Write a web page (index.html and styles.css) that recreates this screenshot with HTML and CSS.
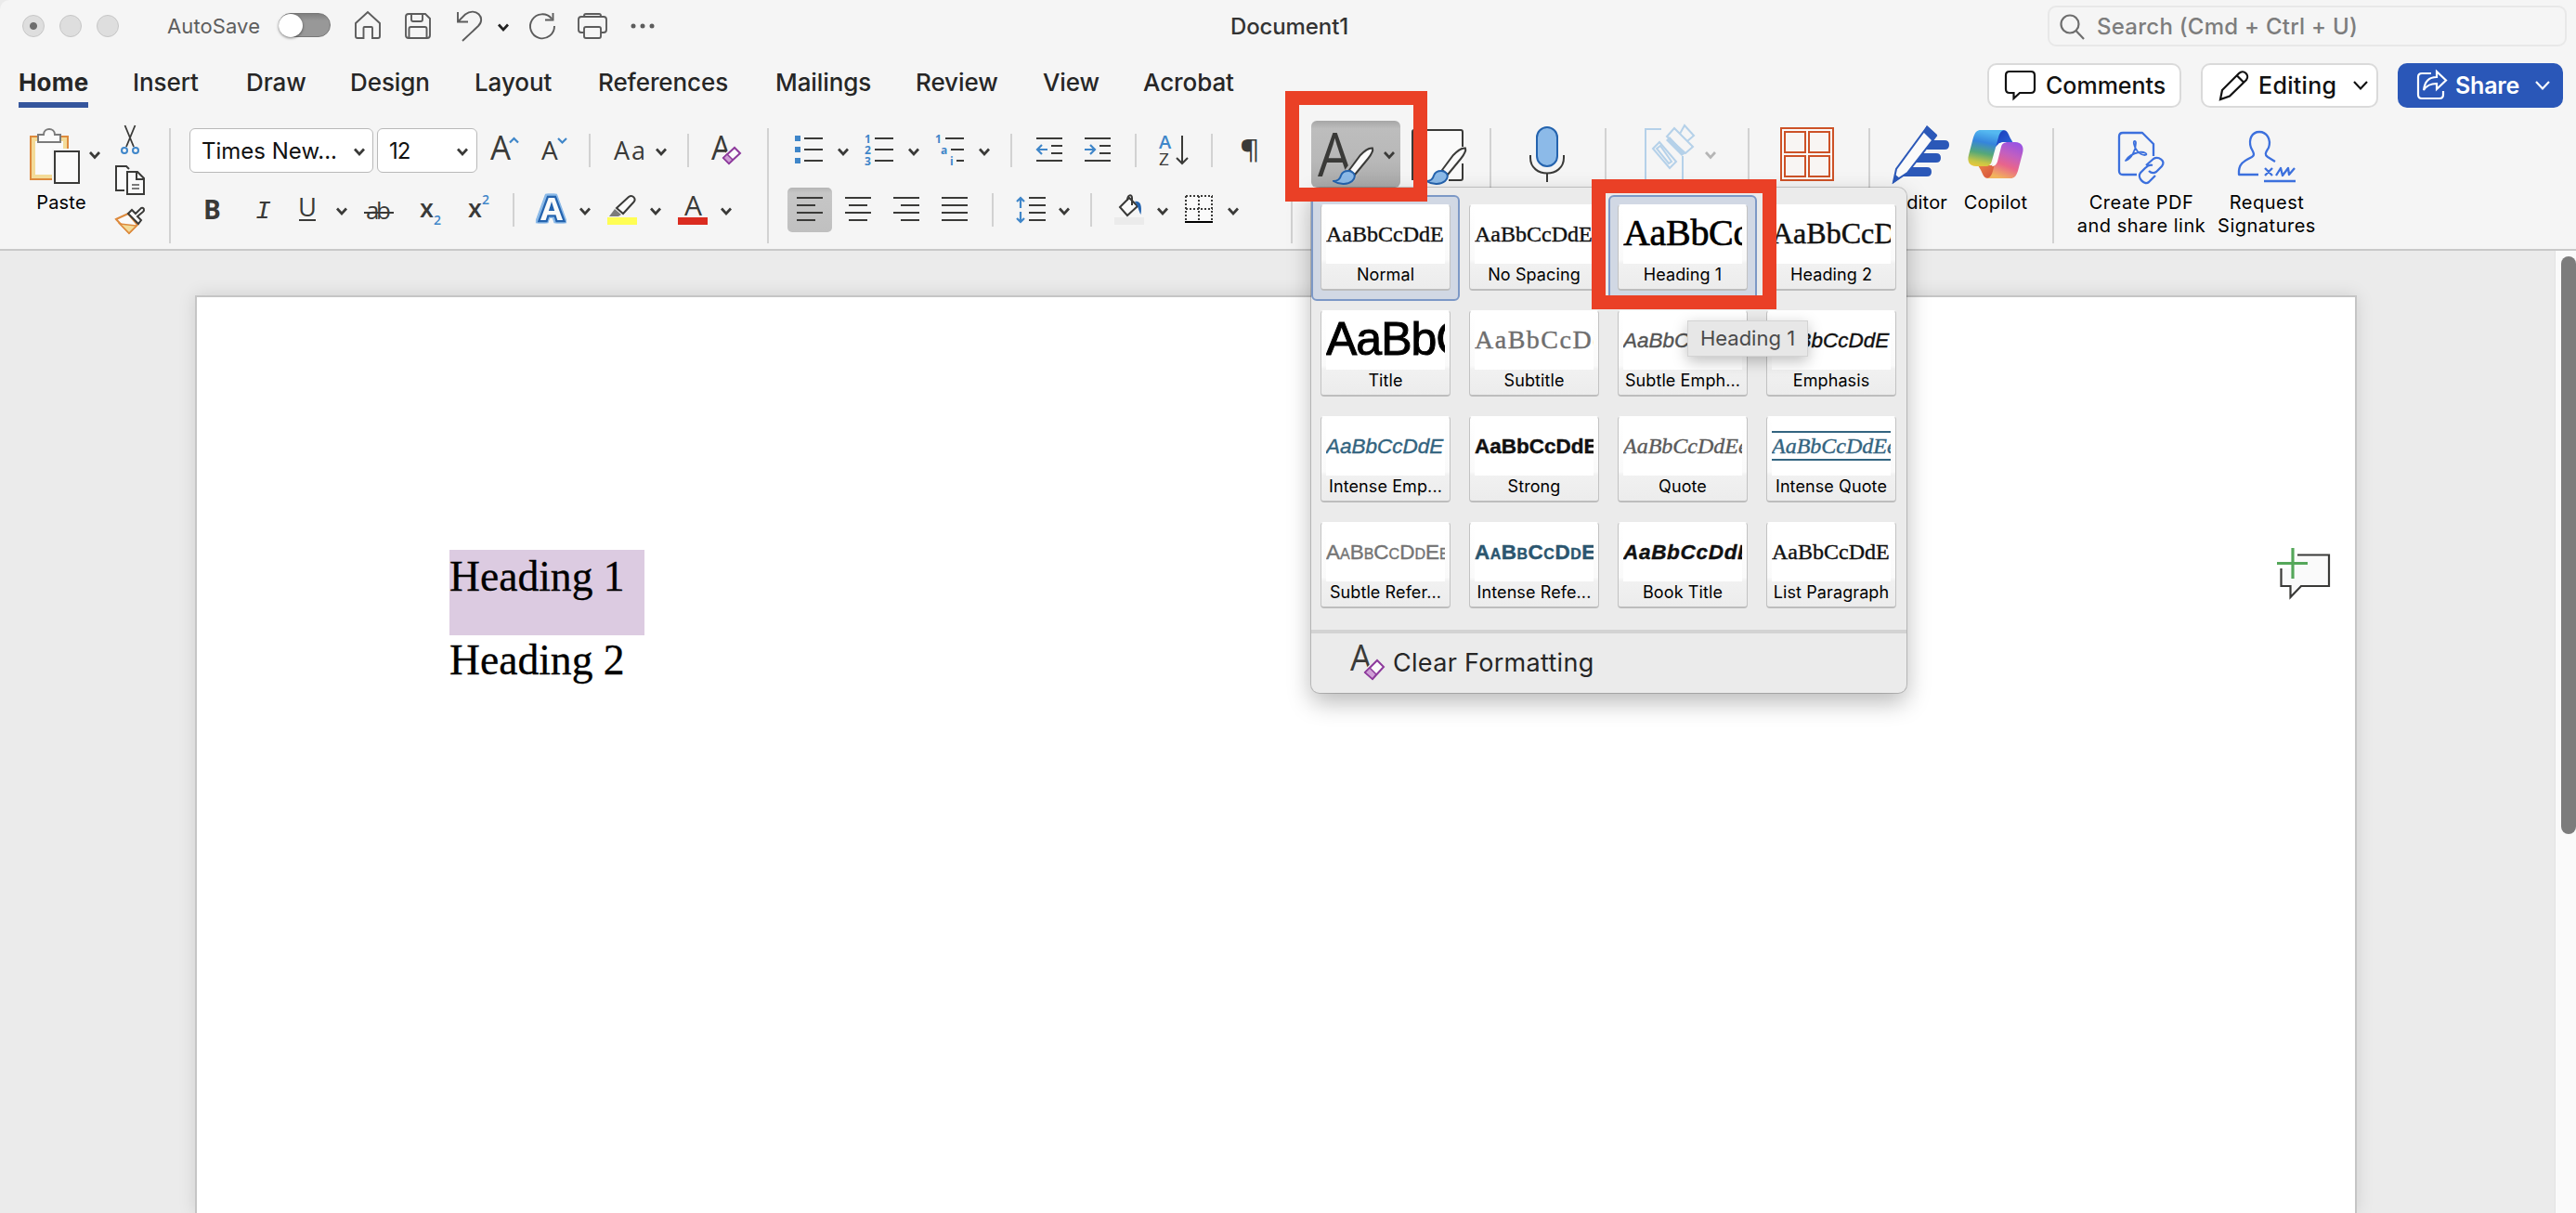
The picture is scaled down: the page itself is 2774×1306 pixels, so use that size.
FILE: index.html
```html
<!DOCTYPE html>
<html lang="en">
<head>
<meta charset="utf-8">
<title>Document1</title>
<link rel="stylesheet" href="styles.css">
</head>
<body>
<svg class="defs" width="0" height="0">
  <symbol id="chev" viewBox="0 0 12 9"><path d="M1 1.5 6 7 11 1.5" fill="none" stroke="currentColor" stroke-width="2.7"/></symbol>
  <symbol id="brush" viewBox="0 0 46 42"><path d="M43 1.500C38 1 34 5 30 9L18 25 24 30 38 13C42 8 44 4 43 1.500Z" fill="#fafafa" stroke="#3a3a38" stroke-width="2"/><path d="M17 26C12 26 10 28 9 31 8 35 5 37 1 37 8 41.500 17 40.500 21 37 24.500 34 24.500 30 22 28 20.500 26.500 19 26 17 26Z" fill="#8cbae8" stroke="#2463ae" stroke-width="2"/></symbol>
</svg>

<header class="ribbon">
  <div class="titlebar">
    <div class="quick">
      <i class="light close"></i><i class="light"></i><i class="light"></i>
      <span class="autosave">AutoSave</span>
      <span class="toggle"><b></b></span>
      <svg width="28" height="56" class="q"><path d="M1 25 14 13 27 25V39Q27 41 25 41H19V30Q19 29 18 29H10.500Q9.500 29 9.500 30V41H3Q1 41 1 39Z"/></svg>
      <svg width="28" height="56" class="q"><path d="M4 15H22L27 20V38Q27 41 24 41H4Q1 41 1 38V18Q1 15 4 15ZM7 15V21Q7 23 9 23H17Q19 23 19 21V15M4.500 41V31Q4.500 29 6.500 29H21.500Q23.500 29 23.500 31V41"/></svg>
      <svg width="28" height="56" class="q"><path d="M1 13V23.500H12M1.500 23 9 15.500C20 7 32 19 23 28L6 44"/></svg>
      <svg width="12" height="9" class="chev dark"><use href="#chev"/></svg>
      <svg width="28" height="56" class="q"><path d="M24 20A13 13 0 1 0 27 28M17 21.500H25.500V14"/></svg>
      <svg width="32" height="56" class="q"><path d="M7 35H4Q1 35 1 32V21Q1 18 4 18H28Q31 18 31 21V32Q31 35 28 35H25M7 18V17Q7 15 9 15H23Q25 15 25 17V18M7 31Q7 29 9 29H23Q25 29 25 31V39Q25 41 23 41H9Q7 41 7 39Z"/></svg>
      <svg width="28" height="56" class="dots"><circle cx="3" cy="28" r="2.500"/><circle cx="13" cy="28" r="2.500"/><circle cx="23" cy="28" r="2.500"/></svg>
    </div>
    <h1 class="doc-title">Document1</h1>
    <div class="search">
      <svg width="28" height="28"><circle cx="11" cy="11" r="9.500"/><path d="M17.500 18 26 27"/></svg>
      <span>Search (Cmd + Ctrl + U)</span>
    </div>
  </div>

  <div class="tabbar">
    <nav class="tabs">
      <a class="active">Home</a><a>Insert</a><a>Draw</a><a>Design</a><a>Layout</a><a>References</a><a>Mailings</a><a>Review</a><a>View</a><a>Acrobat</a>
    </nav>
    <div class="actions">
      <button class="act comments"><svg width="34" height="34"><path d="M5 2H28Q32 2 32 6V21Q32 25 28 25H16L9.500 31V25H5Q1 25 1 21V6Q1 2 5 2Z"/></svg><span>Comments</span></button>
      <button class="act editing"><svg width="34" height="34"><path d="M2 32 4 22 22 4C27-1 34 6 30 11L12 28.500ZM20 6.500 27.500 14"/></svg><span>Editing</span><svg width="16" height="10"><path d="M1 1 8 8.500 15 1"/></svg></button>
      <button class="act share"><svg width="34" height="34"><path d="M16 4H6Q2 4 2 8V27Q2 31 6 31H25Q29 31 29 27V23M22 8V2L32 11.500 22 21V15C15 15 11 17 8 22 9 13 14 8 22 8Z"/></svg><span>Share</span><svg width="16" height="10"><path d="M1 1 8 8.500 15 1"/></svg></button>
    </div>
  </div>

  <div class="groups">
    <section class="group clipboard">
      <div class="paste">
        <svg width="78" height="72">
          <path d="M1 17H41V63H1Z" fill="#f3db98" stroke="#dd8a3d" stroke-width="2"/><path d="M6 22H36V58H6Z" fill="#fafafa"/>
          <path d="M24 30H46V70H24Z" fill="#f5f5f5"/>
          <path d="M9 15H15C15 7 27 7 27 15H33V23H9Z" fill="#fafafa" stroke="#7b7b7b" stroke-width="2"/>
          <path d="M27 33H53V67H27Z" fill="#fafafa" stroke="#3a3a38" stroke-width="2"/>
          <path d="M65 34 70 39.500 75 34" fill="none" stroke="#3a3a38" stroke-width="2.700"/>
        </svg>
        <span class="lbl">Paste</span>
      </div>
      <div class="cliptools">
        <svg width="32" height="34"><path d="M10.500 1 20 24M21.500 1 12 24" fill="none" stroke="#3a3a38" stroke-width="1.800"/><g fill="none" stroke="#3f86c9" stroke-width="2"><circle cx="10" cy="28" r="3"/><circle cx="22" cy="28" r="3"/></g></svg>
        <svg width="34" height="34"><g fill="#fafafa" stroke="#3a3a38" stroke-width="2"><path d="M10 27H1V1H12L15 4"/><path d="M13 7H24L31 14V31H13Z"/><path d="M23 7V15H31" fill="none"/></g><path d="M18 21H26M18 25H26" stroke="#7b7b7b" stroke-width="2"/></svg>
        <svg width="34" height="32"><path d="M1 14 14 8 24 20 15 29Z" fill="#fafafa" stroke="#dd8a3d" stroke-width="2"/><path d="M5 19 23 21 15 29Z" fill="#f3db98" stroke="#dd8a3d" stroke-width="1.500"/><path d="M14 8 18 4 22 8 28 2C31 1 32 4 30 6L24 11 28 15 25 19Z" fill="#fafafa" stroke="#3a3a38" stroke-width="2"/></svg>
      </div>
    </section>

    <section class="group font">
      <div class="row f1">
        <span class="combo">Times New...<svg width="12" height="9"><use href="#chev"/></svg></span>
        <span class="combo small">12<svg width="12" height="9"><use href="#chev"/></svg></span>
        <svg width="32" height="48" class="ic"><text x="0" y="34" font-size="36" textLength="22" lengthAdjust="spacingAndGlyphs">A</text><path class="bl" d="M21 15.500 25.500 11 30 15.500"/></svg>
        <svg width="30" height="48" class="ic"><text x="0" y="34" font-size="28">A</text><path class="bl" d="M18 11 22.500 15.500 27 11"/></svg>
        <i class="sep"></i>
        <svg width="34" height="48" class="ic"><text x="0" y="34" font-size="27">A</text><text x="19" y="34" font-size="27">a</text></svg>
        <svg width="12" height="9" class="chev"><use href="#chev"/></svg>
        <i class="sep"></i>
        <svg width="34" height="48" class="ic"><text x="0" y="34" font-size="36" textLength="21" lengthAdjust="spacingAndGlyphs">A</text><path d="M13 32 25 21 31 27 19 38Z" fill="#f5f5f5" stroke="#f5f5f5" stroke-width="5"/><path d="M13 32 25 21 31 27 19 38Z" fill="#fafafa" stroke="#8d3a9c" stroke-width="2"/><path d="M13 32 17 28 23 34 19 38Z" fill="#cf9fd6" stroke="#8d3a9c" stroke-width="1.500"/></svg>
      </div>
      <div class="row f2">
        <svg width="18" height="48" class="ic"><text x="-2" y="34" font-size="28" class="bold">B</text></svg>
        <svg width="18" height="48" class="ic"><text x="1" y="33" font-size="28" class="mono">I</text></svg>
        <svg width="20" height="48" class="ic"><text x="-1" y="31" font-size="27" textLength="20" lengthAdjust="spacingAndGlyphs">U</text><path d="M0 35H18"/></svg>
        <svg width="12" height="9" class="chev"><use href="#chev"/></svg>
        <svg width="34" height="48" class="ic"><text x="2" y="34" font-size="26" textLength="27">ab</text><path d="M0 27H32"/></svg>
        <svg width="26" height="48" class="ic"><text x="-1" y="32" font-size="27" class="semi">x</text><text x="14" y="40" font-size="14" class="blt">2</text></svg>
        <svg width="26" height="48" class="ic"><text x="-1" y="32" font-size="27" class="semi">x</text><text x="14" y="18" font-size="14" class="blt">2</text></svg>
        <i class="sep"></i>
        <svg width="34" height="48" class="ic"><text x="4" y="35" font-size="34" textLength="24" lengthAdjust="spacingAndGlyphs" class="fx">A</text></svg>
        <svg width="12" height="9" class="chev"><use href="#chev"/></svg>
        <svg width="34" height="48" class="ic"><path d="M2 31 8 23 15 29 12 31Z" fill="#7b7b7b" stroke="none"/><path d="M10 22 23 10C27 7 32 12 28 16L17 28Z" fill="#fafafa"/><path d="M0 32H32V40H0Z" fill="#fffe54" stroke="none"/></svg>
        <svg width="12" height="9" class="chev"><use href="#chev"/></svg>
        <svg width="34" height="48" class="ic"><text x="7" y="30" font-size="30" textLength="19" lengthAdjust="spacingAndGlyphs">A</text><path d="M0 32H32V40H0Z" fill="#db2c20" stroke="none"/></svg>
        <svg width="12" height="9" class="chev"><use href="#chev"/></svg>
      </div>
    </section>

    <section class="group para">
      <div class="row p1">
        <svg width="32" height="48" class="ic"><path d="M10 11H30M10 23H30M10 35H30"/><path d="M0 8H6V14H0ZM0 20H6V26H0ZM0 32H6V38H0Z" fill="#3f86c9" stroke="none"/></svg>
        <svg width="12" height="9" class="chev"><use href="#chev"/></svg>
        <svg width="32" height="48" class="ic"><path d="M10 11H30M10 23H30M10 35H30"/><g class="bn"><text x="-1" y="16">1</text><text x="-1" y="28">2</text><text x="-1" y="40">3</text></g></svg>
        <svg width="12" height="9" class="chev"><use href="#chev"/></svg>
        <svg width="32" height="48" class="ic"><path d="M10 11H30M16 23H30M22 35H30"/><g class="bn"><text x="-1" y="16">1</text><text x="5" y="28">a</text><text x="15" y="40">i</text></g></svg>
        <svg width="12" height="9" class="chev"><use href="#chev"/></svg>
        <i class="sep"></i>
        <svg width="30" height="48" class="ic"><path d="M0 11H28M16 19H28M16 27H28M0 35H28"/><path class="bl" d="M12 23H1M6 18 1 23 6 28"/></svg>
        <svg width="30" height="48" class="ic"><path d="M0 11H28M16 19H28M16 27H28M0 35H28"/><path class="bl" d="M0 23H11M6 18 11 23 6 28"/></svg>
        <i class="sep"></i>
        <svg width="34" height="48" class="ic"><text x="0" y="22" font-size="20" class="blt">A</text><text x="0" y="40" font-size="19" class="med">Z</text><path d="M25 8V38M19 32 25 38 31 32"/></svg>
        <i class="sep"></i>
        <svg width="22" height="48" class="ic"><text x="-1" y="33" font-size="28" textLength="22" lengthAdjust="spacingAndGlyphs" class="med">¶</text></svg>
      </div>
      <div class="row p2">
        <span class="pressed"><svg width="28" height="48" class="ic"><path d="M0 11H28M0 19H20M0 27H28M0 35H20"/></svg></span>
        <svg width="28" height="48" class="ic"><path d="M0 11H28M4 19H24M0 27H28M4 35H24"/></svg>
        <svg width="28" height="48" class="ic"><path d="M0 11H28M8 19H28M0 27H28M8 35H28"/></svg>
        <svg width="28" height="48" class="ic"><path d="M0 11H28M0 19H28M0 27H28M0 35H28"/></svg>
        <i class="sep"></i>
        <svg width="32" height="48" class="ic"><path d="M14 11H32M14 19H32M14 27H32M14 35H32"/><path class="bl" d="M5 22V11M1 15 5 11 9 15M5 26V37M1 33 5 37 9 33"/></svg>
        <svg width="12" height="9" class="chev"><use href="#chev"/></svg>
        <i class="sep"></i>
        <svg width="34" height="48" class="ic"><path d="M0 32H32V40H0Z" fill="#ebebeb" stroke="none"/><path d="M6 21 16 11 25 20 14 30Z" fill="#fafafa"/><path d="M14 14C14 7 19 7 19 11V19" /><path d="M22 15C28 14 30 19 28.500 29 26 25 26 20 22 15Z" fill="#2463ae" stroke="none"/></svg>
        <svg width="12" height="9" class="chev"><use href="#chev"/></svg>
        <svg width="32" height="48" class="ic"><path d="M0 8H30V36H0Z" fill="#fafafa" stroke="none"/><path d="M1 9H30M1 23H30M1 9V35M15 9V35M29 9V35" stroke-dasharray="2 2"/><path d="M0 37H30" stroke="#000"/></svg>
        <svg width="12" height="9" class="chev"><use href="#chev"/></svg>
      </div>
    </section>

    <section class="group styles">
      <div class="styles-btn">
        <svg width="96" height="72"><text x="7" y="60" font-size="66" class="thin" textLength="37" lengthAdjust="spacingAndGlyphs">A</text><path d="M34 56 46 40 56 52 46 66 30 66Z" fill="#b4b4b4"/><use href="#brush" x="23" y="28" width="46" height="42"/><path d="M79 34 84 39.500 89 34" fill="none" stroke="#3a3a38" stroke-width="2.700"/></svg>
      </div>
      <svg width="64" height="72" class="big pane"><path d="M1 64V12Q1 10 3 10H53Q55 10 55 12V62Q55 64 53 64H40" fill="#fafafa" stroke="#3a3a38" stroke-width="2"/><path d="M52 28H58V46H52Z" fill="#f7f7f7"/><use href="#brush" x="15" y="28" width="46" height="42"/></svg>
    </section>

    <section class="group dictate">
      <svg width="38" height="72" class="big"><rect x="8" y="7" width="22" height="42" rx="11" fill="#8cbae8" stroke="#2463ae" stroke-width="2"/><path d="M1 37V40C1 62 37 62 37 40V37M19 57V66" fill="none" stroke="#3a3a38" stroke-width="2"/></svg>
    </section>
    <section class="group sens">
      <svg width="78" height="72" class="big"><g fill="none" stroke="#b5d1e9" stroke-width="2"><path d="M18 9H1V66H41V38"/><path d="M9 30 16 23 34 44 27 51Z"/><path d="M13 30 17 27 29 44 26 46Z"/><path d="M24 17 32 8 52 28 44 35ZM38 14 43 5 53 16 46 22"/></g><path d="M23 21 27 17 44 35 40 38Z" fill="#b5d1e9"/><path d="M66 34 71 39.500 76 34" fill="none" stroke="#b5b5b5" stroke-width="2.700"/></svg>
    </section>
    <section class="group addins">
      <svg width="58" height="72" class="big"><path d="M1 8H57V64H1Z" fill="#fafafa" stroke="#cd5227" stroke-width="2"/><g fill="#f8f5f3" stroke="#cd5227" stroke-width="2"><path d="M5 12H27V34H5ZM31 12H53V34H31ZM5 38H27V60H5ZM31 38H53V60H31Z"/></g></svg>
    </section>

    <section class="group editor">
      <div class="tool ed"><svg width="62" height="72"><path d="M28 21H56Q61 21 61 26 61 31 56 31H24ZM24 35H47Q52 35 52 40 52 45 47 45H16ZM16 50H37Q42 50 42 55 42 60 37 60H8Z" fill="#2b58b8"/><path d="M1 66 4 52 37 7 47 16 16 56Z" fill="#fafafa" stroke="#2b58b8" stroke-width="2"/><path d="M37 5 48 15 43 22 33 12ZM0 68 3 58 8 62Z" fill="#2b58b8"/></svg><span class="lbl">Editor</span></div>
      <div class="tool cp"><svg width="60" height="72">
        <defs>
          <linearGradient id="ga" x1="0.300" y1="0" x2="0.100" y2="1"><stop offset="0" stop-color="#54b8f0"/><stop offset=".3" stop-color="#3585dc"/><stop offset=".6" stop-color="#56a878"/><stop offset=".85" stop-color="#c8c645"/><stop offset="1" stop-color="#efc73c"/></linearGradient>
          <linearGradient id="gb" x1="0.800" y1="0" x2="0.400" y2="1"><stop offset="0" stop-color="#9652e4"/><stop offset=".35" stop-color="#c25fc0"/><stop offset=".65" stop-color="#e8648c"/><stop offset="1" stop-color="#f2b35c"/></linearGradient>
          <linearGradient id="gc" x1="0" y1="0" x2="1" y2="1"><stop offset="0" stop-color="#1738b8"/><stop offset="1" stop-color="#2f6bdc"/></linearGradient>
          <linearGradient id="gd" x1="0" y1="0" x2="1" y2="1"><stop offset="0" stop-color="#ee8a48"/><stop offset="1" stop-color="#d24a3c"/></linearGradient>
        </defs>
        <g transform="translate(0 10)"><path d="M30 0H38C43 0 44 5 46 9L49 14H34L28 20Z" fill="url(#gc)"/><path d="M30 52H22C17 52 16 47 14 43L11 38H26L32 32Z" fill="url(#gd)"/><path d="M14 0H40C36 0 34 4 33 8L26 33C25 37 23 39 19 39H9C2 39-1 34 1 27L6 8C8 2 10 0 14 0Z" fill="url(#ga)"/><path d="M46 52H20C24 52 26 48 27 44L34 19C35 15 37 13 41 13H51C58 13 61 18 59 25L54 44C52 50 50 52 46 52Z" fill="url(#gb)"/><path d="M39 13C35 13 33 15 32 18L26 39C29 39 31 37 32 34L36 18C37 15 38 14 42 13Z" fill="#fafafa"/></g></svg><span class="lbl">Copilot</span></div>
    </section>

    <section class="group acrobat">
      <div class="tool pdf"><svg width="50" height="72" class="adobe"><path d="M20 58H5Q1 58 1 54V17Q1 13 5 13H26L38 25V38"/><path d="M8 43C14 41 19 32 19 24 19 21 16 21 17 25 18 31 23 37 29 37 33 36 28 33 22 34 16 35 10 39 8 43Z" stroke-width="1.800"/><path d="M30 48 38 41C43 38 52 43 47 49L41 55C38 57 35 56 33 54M37 48C34 47 32 48 29 51L24 56C20 61 28 70 33 66L40 59"/></svg><span class="lbl">Create PDF<br>and share link</span></div>
      <div class="tool sig"><svg width="64" height="72" class="adobe"><path d="M23 58H2C1 46 8 43 16 39 20 37 17 33 15 29 12 20 16 12 24 12 32 12 37 20 34 29 31 34 29 36 33 39L41 44M29 65H63"/><path d="M30 51 38 59M38 51 30 59M42 59 47 51 49 59 55 51 56 58 62 51"/></svg><span class="lbl">Request<br>Signatures</span></div>
    </section>
  </div>
</header>

<main class="workspace">
  <div class="canvas">
    <article class="page">
      <p class="selected">Heading 1</p>
      <p class="line">Heading 2</p>
      <svg class="add-comment" width="60" height="60"><path d="M22 7.500H56V41H26L14.500 53V41H4.500V22" fill="#fafafa" stroke="#3a3a38" stroke-width="2.200"/><path d="M5 6H20V22H5Z" fill="#fff"/><path d="M17 0V33M0 16.500H33" stroke="#55a75a" stroke-width="3.200"/></svg>
    </article>
  </div>
  <div class="track"><div class="thumb"></div></div>
</main>

<aside class="gallery">
  <div class="cards">
    <div class="cell sel"><div class="card"><div class="pv s-normal">AaBbCcDdE</div><span>Normal</span></div></div>
    <div class="cell"><div class="card"><div class="pv s-normal">AaBbCcDdE</div><span>No Spacing</span></div></div>
    <div class="cell sel"><div class="card"><div class="pv s-h1">AaBbCcDd</div><span>Heading 1</span></div></div>
    <div class="cell"><div class="card"><div class="pv s-h2">AaBbCcDd</div><span>Heading 2</span></div></div>
    <div class="cell"><div class="card"><div class="pv s-title">AaBbCc</div><span>Title</span></div></div>
    <div class="cell"><div class="card"><div class="pv s-sub">AaBbCcDd</div><span>Subtitle</span></div></div>
    <div class="cell"><div class="card"><div class="pv s-semph">AaBbCcDdE</div><span>Subtle Emph...</span></div></div>
    <div class="cell"><div class="card"><div class="pv s-emph">AaBbCcDdE</div><span>Emphasis</span></div></div>
    <div class="cell"><div class="card"><div class="pv s-iemph">AaBbCcDdE</div><span>Intense Emp...</span></div></div>
    <div class="cell"><div class="card"><div class="pv s-strong">AaBbCcDdEe</div><span>Strong</span></div></div>
    <div class="cell"><div class="card"><div class="pv s-quote">AaBbCcDdEe</div><span>Quote</span></div></div>
    <div class="cell"><div class="card"><div class="pv s-iquote"><b>AaBbCcDdEe</b></div><span>Intense Quote</span></div></div>
    <div class="cell"><div class="card"><div class="pv s-sref">AaBbCcDdEe</div><span>Subtle Refer...</span></div></div>
    <div class="cell"><div class="card"><div class="pv s-iref">AaBbCcDdEe</div><span>Intense Refe...</span></div></div>
    <div class="cell"><div class="card"><div class="pv s-book">AaBbCcDdEe</div><span>Book Title</span></div></div>
    <div class="cell"><div class="card"><div class="pv s-normal">AaBbCcDdE</div><span>List Paragraph</span></div></div>
  </div>
  <div class="clear">
    <svg width="38" height="40" class="ic"><text x="0" y="28" font-size="38" textLength="23" lengthAdjust="spacingAndGlyphs">A</text><path d="M16 30 29 17 36 24 24 37Z" fill="#ebebeb" stroke="#ebebeb" stroke-width="5"/><path d="M16 30 29 17 36 24 24 37Z" fill="#fafafa" stroke="#8d3a9c" stroke-width="2"/><path d="M16 30 21 25 28 32 24 37Z" fill="#cf9fd6" stroke="#8d3a9c" stroke-width="1.500"/></svg>
    <span>Clear Formatting</span>
  </div>
</aside>
<div class="tooltip">Heading 1</div>
<div class="mark mark-a"></div>
<div class="mark mark-b"></div>
</body>
</html>
```
FILE: styles.css
```css
* { box-sizing: border-box; }
body { margin: 0; width: 2774px; height: 1306px; overflow: hidden; position: relative; background: #ebebeb; font-family: Inter, "Liberation Sans", sans-serif; color: #262626; }
.defs { position: absolute; }
svg { display: block; overflow: visible; }
.ribbon { height: 270px; background: #f5f5f5; border-bottom: 2px solid #c9c9c9; border-top-left-radius: 10px; }

.titlebar { height: 56px; display: grid; grid-template-columns: 1fr 370px 1fr; align-items: center; }
.quick { display: grid; grid-template-columns: 40px 40px 76px 120px 82px 54px 56px 44px 34px 52px 57px 28px; padding-left: 24px; align-items: center; }
.light { width: 24px; height: 24px; border-radius: 50%; background: #dedede; border: 1px solid #c6c6c6; }
.close { background: radial-gradient(circle, #6e6e6e 3.500px, #dedede 4.500px); }
.autosave { font-size: 22px; color: #5e5e5e; letter-spacing: .1px; }
.toggle { width: 56px; height: 26px; margin-top: -2px; border-radius: 13px; background: linear-gradient(#7f7f7f, #989898 30%); border: 1px solid #777; }
.toggle b { display: block; width: 26px; height: 25px; margin-left: -1px; border-radius: 50%; background: #fff; box-shadow: 0 1px 3px rgba(0,0,0,.5); }
.q { fill: none; stroke: #5c5c5c; stroke-width: 1.900; }
.dots { fill: #5c5c5c; }
.chev { color: #3a3a38; }
.dark { color: #222; margin-top: 2px; }
.doc-title { margin: 0; padding-left: 3px; font-size: 24px; font-weight: 500; text-align: center; letter-spacing: -.1px; color: #333; }
.search { justify-self: end; width: 559px; height: 44px; margin-right: 10px; border: 2px solid #e8e8e8; border-radius: 9px; display: flex; align-items: center; padding: 1px 0 0 11px; gap: 12px; color: #7d7d7d; font-size: 24px; font-weight: 500; letter-spacing: .25px; }
.search svg { fill: none; stroke: #6e6e6e; stroke-width: 2.200; }

.tabbar { height: 68px; display: flex; justify-content: space-between; }
.tabs { display: grid; grid-template-columns: 123px 122px 112px 134px 133px 191px 151px 137px 108px 110px; padding-left: 20px; font-size: 26px; font-weight: 500; }
.tabs a { justify-self: start; height: 60px; line-height: 66px; letter-spacing: -.08px; }
.tabs .active { font-weight: 700; letter-spacing: .2px; background: linear-gradient(#35569d, #35569d) 0 100% / 100% 6px no-repeat; }
.actions { display: flex; gap: 21px; padding: 12px 14px 0 0; }
.act { height: 48px; margin: 0; border: 2px solid #dadada; border-radius: 10px; background: #fff; display: flex; align-items: center; font: 500 25px Inter, sans-serif; color: #111; letter-spacing: 0; padding: 0 0 0 17px; }
.act svg { fill: none; stroke: currentColor; stroke-width: 2.200; flex: none; }
.comments { width: 209px; } .comments span { margin-left: 10px; }
.editing { width: 191px; letter-spacing: .3px; } .editing span { width: 84px; margin: 0 18px 0 9px; }
.share { width: 178px; border: 0; background: #2a57b8; color: #fff; padding-left: 20px; font-weight: 600; letter-spacing: -.2px; } .share span { margin: 0 17px 0 8px; }

.groups { display: flex; padding-top: 14px; }
.group { height: 124px; border-left: 2px solid #d2d2d2; display: flex; flex: none; }
.lbl { display: block; margin-top: 4px; font-size: 20px; line-height: 24.500px; text-align: center; color: #000; white-space: nowrap; letter-spacing: .2px; }
.clipboard { width: 182px; border: 0; padding-left: 32px; }
.paste { width: 92px; margin-top: -8px; } .paste .lbl { width: 68px; }
.cliptools { margin-top: -4px; display: grid; grid-template-rows: 44px 44px 32px; }
.font { width: 644px; flex-direction: column; gap: 16px; }
.para { width: 564px; flex-direction: column; gap: 16px; }
.row { display: grid; height: 48px; align-items: center; }
.f1 { padding-left: 20px; grid-template-columns: 202px 122px 55px 51px 27px 45px 34px 26px 34px; }
.f2 { padding-left: 37px; grid-template-columns: 53px 48px 40px 30px 61px 52px 47px 26px 46px 30px 46px 30px 46px 12px; }
.p1 { padding-left: 28px; grid-template-columns: 46px 30px 46px 30px 46px 34px 28px 52px 54px 26px 56px 32px 22px; }
.p2 { padding-left: 20px; grid-template-columns: 62px 52px 52px 54px 26px 46px 34px 26px 46px 30px 46px 12px; }
.row .chev { margin-top: 2px; }
.sep { width: 2px; height: 36px; background: #d2d2d2; }
.combo { width: 198px; height: 48px; border: 1px solid #b9b9b9; border-radius: 6px; background: #fff; display: flex; align-items: center; justify-content: space-between; padding: 0 8px 0 12px; font-size: 24px; color: #111; }
.combo.small { width: 108px; padding-right: 9px; letter-spacing: -1px; }
.combo svg { color: #3a3a38; margin-top: 2px; }
.ic { fill: none; stroke: #3a3a38; stroke-width: 2; }
.ic text { fill: #3a3a38; stroke: none; font-family: "Open Sans", sans-serif; }
.ic .bl { stroke: #3f86c9; stroke-width: 2.200; }
.ic .blt { fill: #3f86c9; font-weight: 600; }
.ic .bold { font-weight: 700; } .ic .semi { font-weight: 600; } .ic .med { font-weight: 500; }
.ic .mono { font-family: "Liberation Mono", monospace; font-style: italic; }
.ic .bn text { fill: #3f86c9; font-size: 12px; font-weight: 700; }
.ic .fx { fill: #fafafa; stroke: #2463ae; stroke-width: 4.500; paint-order: stroke; font-weight: 700; filter: drop-shadow(1.500px 0 0 #8cbae8) drop-shadow(-1.500px 0 0 #8cbae8) drop-shadow(0 1.500px 0 #8cbae8) drop-shadow(0 -1.500px 0 #8cbae8); }
.pressed { width: 48px; height: 48px; border-radius: 5px; padding-left: 10px; background: linear-gradient(#b5b5b5, #c6c6c6 12%, #c0c0c0); }

.styles { width: 214px; padding-left: 20px; }
.styles-btn { width: 96px; height: 72px; margin-top: -8px; border-radius: 6px; background: linear-gradient(#a6a6a6, #bdbdbd 12%, #b8b8b8 60%, #a9a9a9); }
.thin { font-family: "Open Sans", sans-serif; font-weight: 400; fill: #3a3a38; }
.big { margin-top: -8px; }
.pane { margin-left: 12px; }
.dictate { width: 124px; padding-left: 41px; }
.sens { width: 154px; padding-left: 41px; }
.addins { width: 130px; padding-left: 33px; }
.editor { width: 198px; padding-left: 24px; }
.tool { margin-top: -8px; display: flex; flex-direction: column; align-items: center; }
.ed { width: 62px; } .cp { width: 72px; margin-left: 13px; }
.acrobat { padding-left: 24px; }
.pdf { width: 140px; } .pdf .lbl { letter-spacing: .5px; } .sig { width: 108px; margin-left: 11px; } .sig .lbl { letter-spacing: .5px; }
.adobe { fill: none; stroke: #3c70dd; stroke-width: 2.300; stroke-linejoin: round; }

.workspace { height: 1036px; display: flex; }
.canvas { flex: 1; padding: 48px 0 0 210px; }
.page { position: relative; width: 2328px; height: 988px; border: 2px solid #c5c5c5; border-bottom: 0; background: #fff; box-shadow: 0 0 18px rgba(0,0,0,.12); padding: 272px 0 0 272px; font: 45.600px/52px "Liberation Serif", serif; color: #000; -webkit-text-stroke: .3px #000; }
.page p { margin: 0; }
.selected { width: 210px; height: 92px; padding-top: 3px; background: #dccbe1; }
.line { padding-top: 1px; }
.add-comment { position: absolute; left: 2240px; top: 270px; }
.track { width: 23px; background: #fafafa; border-left: 1px solid #e3e3e3; padding: 6px 0 0 6px; }
.thumb { height: 622px; width: 16px; border-radius: 8px; background: #7c7c7c; }

.gallery { position: absolute; left: 1412px; top: 202px; width: 641px; height: 544px; background: #ebebeb; border-radius: 9px; box-shadow: 0 0 0 1px rgba(0,0,0,.18), 0 10px 26px rgba(0,0,0,.28); overflow: hidden; display: flex; flex-direction: column; }
.cards { height: 480px; padding: 8px 0 0 0; display: grid; grid-template-columns: repeat(4, 160px); grid-template-rows: repeat(4, 114px); border-bottom: 4px solid #d3d3d3; }
.cell { width: 160px; height: 114px; padding: 8px; border: 2px solid transparent; border-radius: 6px; }
.sel { background: #d1d8e4; border-color: #7c98c6; }
.card { width: 140px; height: 93px; border: 1px solid #c2c2c2; border-bottom: 2px solid #bdbdbd; border-top-color: #fff; border-radius: 4px; background: linear-gradient(#fff, #fafafa 65%, #f1f1f1 70%, #ececec); display: flex; flex-direction: column; align-items: center; }
.card span { font-size: 18px; line-height: 24px; color: #000; white-space: nowrap; letter-spacing: .1px; }
.pv { width: 128px; height: 63px; overflow: hidden; white-space: nowrap; background: #fff; color: #111; font-family: "Liberation Serif", serif; font-size: 24px; line-height: 63px; -webkit-text-stroke: .4px; }
.s-normal { font-size: 24px; }
.s-h1 { font-size: 40px; line-height: 60px; color: #000; letter-spacing: -.3px; -webkit-text-stroke: .7px; }
.s-h2 { font-size: 32px; line-height: 61px; -webkit-text-stroke: .5px; }
.s-title { font: 50px/60px "Liberation Sans", sans-serif; letter-spacing: -1px; color: #000; -webkit-text-stroke: 1px; }
.s-sub { font-size: 28px; line-height: 62px; letter-spacing: 1.500px; color: #6e6e6e; }
.s-semph, .s-emph, .s-iemph, .s-strong, .s-sref, .s-iref, .s-book { font-family: "Liberation Sans", sans-serif; font-size: 22.500px; line-height: 63px; }
.s-semph { font-style: italic; color: #555; }
.s-emph { font-style: italic; }
.s-iemph { font-style: italic; color: #336480; }
.s-strong { font-weight: 700; }
.s-quote { font-style: italic; color: #5a5a5a; }
.s-iquote { font-style: italic; color: #336480; padding-top: 15px; }
.s-iquote b { display: block; font-weight: 400; height: 32px; line-height: 29px; border-top: 2px solid #336480; border-bottom: 2px solid #336480; }
.s-sref { font-variant: small-caps; color: #747474; }
.s-iref { font-variant: small-caps; font-weight: 700; color: #2b566f; letter-spacing: .5px; }
.s-book { font-weight: 700; font-style: italic; letter-spacing: .7px; }
.clear { flex: 1; display: flex; padding: 12px 0 0 42px; gap: 8px; }
.clear span { font-size: 27px; line-height: 39px; letter-spacing: .3px; }
.tooltip { position: absolute; left: 1817px; top: 345px; width: 130px; height: 39px; background: #e7e7e7; border: 1px solid #d3d3d3; box-shadow: 0 5px 16px rgba(0,0,0,.25); font-size: 22px; line-height: 37px; text-align: center; color: #4a4a4a; }
.mark { position: absolute; border: 15px solid #ea4026; }
.mark-a { left: 1384px; top: 98px; width: 153px; height: 119px; }
.mark-b { left: 1714px; top: 193px; width: 199px; height: 140px; }
```
